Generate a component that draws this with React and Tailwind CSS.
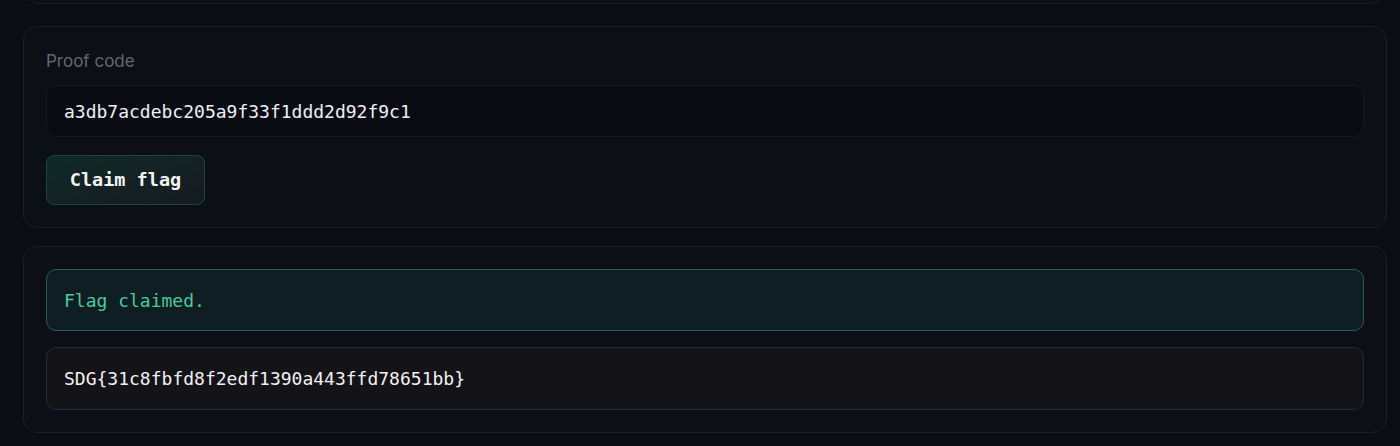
import React from "react";

const mono = { fontFamily: '"DejaVu Sans Mono", "Liberation Mono", monospace' };

export default function App() {
  return (
    <div className="h-[446px] overflow-hidden bg-[#0a0d14]">
      <div className="ml-[23px] w-[1364px] flex flex-col">
        {/* previous card, mostly scrolled away */}
        <div className="-mt-[60px] h-[64px] rounded-[14px] border border-[#1b1f28] bg-[#0c0f16] mx-[2px]" />

        {/* Proof form */}
        <div className="mt-[22px] rounded-[14px] border border-[#1b1f28] bg-[#0c0f16] px-[22px] pt-[23px] pb-[22px]">
          <div className="text-[17px] leading-[22px] text-[#636873] font-['Inter',sans-serif]">Proof code</div>
          <div
            className="mt-[13px] h-[52px] rounded-[10px] border border-[#161a23] bg-[#080b12] flex items-center px-[17px] text-[18px] text-[#eef0f3]"
            style={mono}
          >
            a3db7acdebc205a9f33f1ddd2d92f9c1
          </div>
          <button
            className="mt-[18px] h-[50px] w-[159px] rounded-[8px] border border-[#1d4640] bg-gradient-to-br from-[#0f2a29] to-[#161a1d] text-[18.5px] font-bold text-[#f2f4f5]"
            style={mono}
          >
            Claim flag
          </button>
        </div>

        {/* Result */}
        <div className="mt-[18px] rounded-[14px] border border-[#1b1f28] bg-[#0c0f16] px-[22px] py-[22px] flex flex-col gap-[16px]">
          <div
            className="h-[62px] rounded-[10px] border border-[#2a5c55] bg-[#0f1e22] flex items-center px-[17px] text-[18px] text-[#4cc9a0]"
            style={mono}
          >
            Flag claimed.
          </div>
          <div
            className="h-[63px] rounded-[10px] border border-[#2b2a28] bg-[#141317] flex items-center px-[17px] text-[18px] text-[#f1f1f2]"
            style={mono}
          >
            SDG{"{"}31c8fbfd8f2edf1390a443ffd78651bb{"}"}
          </div>
        </div>
      </div>
    </div>
  );
}
